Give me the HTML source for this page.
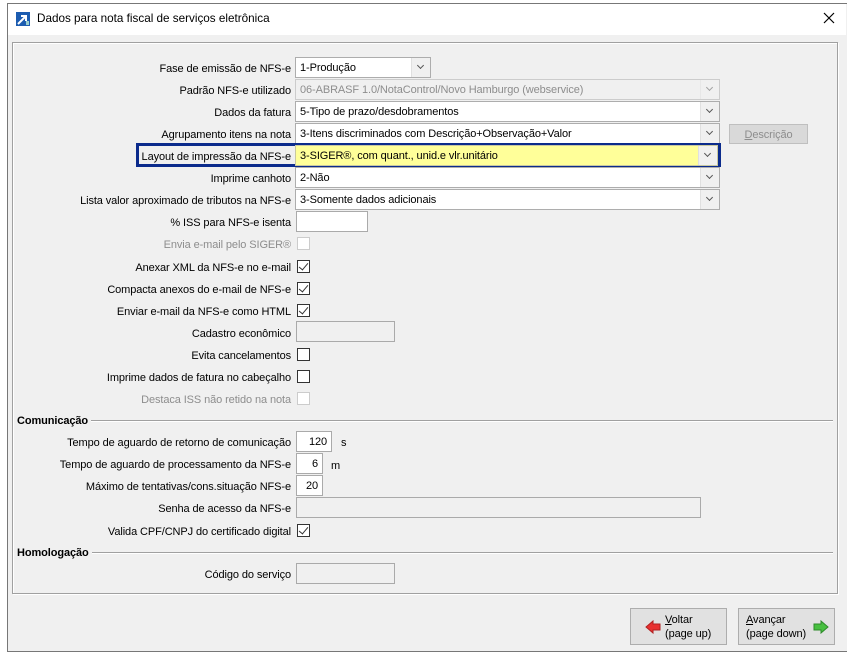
<!DOCTYPE html>
<html><head><meta charset="utf-8"><style>
*{box-sizing:border-box;margin:0;padding:0}
body{width:847px;height:655px;background:#fff;font-family:"Liberation Sans",sans-serif;font-size:11px;letter-spacing:-0.1px;color:#000;position:relative;overflow:hidden}
.win{position:absolute;left:7px;top:3px;width:840px;height:649px;border:1px solid #777;border-right:none;background:#f0f0f0}
.title{position:absolute;left:8px;top:4px;width:838px;height:31px;background:#fff}
.ttext{position:absolute;left:37px;top:12px;font-size:11.7px;letter-spacing:0}
.panel{position:absolute;left:12px;top:42px;width:826px;height:552px;border:1px solid #a0a0a0;box-shadow:inset 1px 1px 0 #fff,1px 1px 0 #fff}
.lbl{position:absolute;right:556px;white-space:nowrap;text-align:right;margin-top:2px}
.dis{color:#8d8d8d}
.cb{position:absolute;height:21px;border:1px solid #adadad;background:#fff;padding:4px 0 0 4px;white-space:nowrap;overflow:hidden}
.cb .ar{position:absolute;right:0;top:0;width:19px;height:19px;background:#f0f0f0;border-left:1px solid #e0e0e0}
.cb .ar:after{content:"";position:absolute;left:6px;top:5px;width:4px;height:4px;border-right:1px solid #555;border-bottom:1px solid #555;transform:rotate(45deg)}
.ed{position:absolute;height:21px;border:1px solid #aaa;background:#fff;text-align:right;padding:4px 4px 0 0}
.ed.g{background:#f0f0f0}
.chk{position:absolute;left:297px;width:13px;height:13px;border:1px solid #333;background:#fff}
.chk.d{border-color:#ccc}
.chk.on:after{content:"";position:absolute;left:3px;top:0px;width:4px;height:8px;border-right:1.3px solid #333;border-bottom:1.3px solid #333;transform:rotate(40deg)}
.hdr{position:absolute;left:17px;font-weight:bold;background:#f0f0f0;padding-right:3px;margin-top:1px}
.line{position:absolute;left:17px;width:816px;height:1px;background:#a0a0a0;box-shadow:0 1px 0 #fff}
.btn{position:absolute;border:1px solid #adadad;background:#e1e1e1;line-height:14px}
u{text-decoration:underline}
</style></head><body>
<div class="win"></div>
<div class="title"></div>
<svg style="position:absolute;left:16px;top:12px" width="14" height="14"><rect width="14" height="14" fill="#1c5cb0"/><path d="M2 12 L9 5 M5 4 H10 V9" stroke="#fff" stroke-width="2" fill="none"/><rect x="10" y="9" width="3" height="4" fill="#9cc"/></svg>
<div class="ttext">Dados para nota fiscal de serviços eletrônica</div>
<svg style="position:absolute;left:823px;top:12px" width="12" height="12"><path d="M1 1L11 11M11 1L1 11" stroke="#000" stroke-width="1.2"/></svg>
<div class="panel"></div>

<div class="lbl" style="top:61px">Fase de emissão de NFS-e</div>
<div class="cb" style="left:295px;top:57px;width:136px">1-Produção<span class="ar"></span></div>
<div class="lbl" style="top:83px">Padrão NFS-e utilizado</div>
<div class="cb" style="left:295px;top:79px;width:425px;background:#f0f0f0;color:#8d8d8d;border-color:#ccc">06-ABRASF 1.0/NotaControl/Novo Hamburgo (webservice)<span class="ar" style="opacity:.5"></span></div>
<div class="lbl" style="top:105px">Dados da fatura</div>
<div class="cb" style="left:295px;top:101px;width:425px">5-Tipo de prazo/desdobramentos<span class="ar"></span></div>
<div class="lbl" style="top:127px">Agrupamento itens na nota</div>
<div class="cb" style="left:295px;top:123px;width:425px">3-Itens discriminados com Descrição+Observação+Valor<span class="ar"></span></div>
<div class="btn" style="left:729px;top:124px;width:79px;height:20px;color:#8d8d8d;text-align:center;padding-top:3px;background:#d9d9d9;border-color:#bfbfbf"><u>D</u>escrição</div>
<div style="position:absolute;left:136px;top:143px;width:585px;height:24px;border:3px solid #0b2b8c"></div>
<div class="lbl" style="top:149px">Layout de impressão da NFS-e</div>
<div class="cb" style="left:295px;top:145px;width:423px;background:#ffff99;border-color:#c8c8a0">3-SIGER®, com quant., unid.e vlr.unitário<span class="ar"></span></div>
<div class="lbl" style="top:171px">Imprime canhoto</div>
<div class="cb" style="left:295px;top:167px;width:425px">2-Não<span class="ar"></span></div>
<div class="lbl" style="top:193px">Lista valor aproximado de tributos na NFS-e</div>
<div class="cb" style="left:295px;top:189px;width:425px">3-Somente dados adicionais<span class="ar"></span></div>
<div class="lbl" style="top:215px">% ISS para NFS-e isenta</div>
<div class="ed" style="left:296px;top:211px;width:72px"></div>
<div class="lbl dis" style="top:237px">Envia e-mail pelo SIGER®</div><div class="chk d" style="top:237px"></div>
<div class="lbl" style="top:260px">Anexar XML da NFS-e no e-mail</div><div class="chk on" style="top:260px"></div>
<div class="lbl" style="top:282px">Compacta anexos do e-mail de NFS-e</div><div class="chk on" style="top:282px"></div>
<div class="lbl" style="top:304px">Enviar e-mail da NFS-e como HTML</div><div class="chk on" style="top:304px"></div>
<div class="lbl" style="top:326px">Cadastro econômico</div>
<div class="ed g" style="left:296px;top:321px;width:99px"></div>
<div class="lbl" style="top:348px">Evita cancelamentos</div><div class="chk" style="top:348px"></div>
<div class="lbl" style="top:370px">Imprime dados de fatura no cabeçalho</div><div class="chk" style="top:370px"></div>
<div class="lbl dis" style="top:392px">Destaca ISS não retido na nota</div><div class="chk d" style="top:392px"></div>

<div class="line" style="top:420px"></div>
<div class="hdr" style="top:414px">Comunicação</div>
<div class="lbl" style="top:435px">Tempo de aguardo de retorno de comunicação</div>
<div class="ed" style="left:296px;top:431px;width:36px">120</div><div style="position:absolute;left:341px;top:437px">s</div>
<div class="lbl" style="top:457px">Tempo de aguardo de processamento da NFS-e</div>
<div class="ed" style="left:296px;top:453px;width:27px">6</div><div style="position:absolute;left:331px;top:460px">m</div>
<div class="lbl" style="top:479px">Máximo de tentativas/cons.situação NFS-e</div>
<div class="ed" style="left:296px;top:475px;width:27px">20</div>
<div class="lbl" style="top:501px">Senha de acesso da NFS-e</div>
<div class="ed g" style="left:296px;top:497px;width:405px"></div>
<div class="lbl" style="top:524px">Valida CPF/CNPJ do certificado digital</div><div class="chk on" style="top:524px"></div>

<div class="line" style="top:552px"></div>
<div class="hdr" style="top:546px">Homologação</div>
<div class="lbl" style="top:567px">Código do serviço</div>
<div class="ed g" style="left:296px;top:563px;width:99px"></div>

<div class="btn" style="left:630px;top:608px;width:97px;height:37px">
<svg style="position:absolute;left:14px;top:11px" width="16" height="14"><path d="M1 7 L8 1 V4 H15 V10 H8 V13 Z" fill="#e83030" stroke="#b02020"/></svg>
<div style="position:absolute;left:34px;top:4px"><u>V</u>oltar<br>(page up)</div></div>
<div class="btn" style="left:738px;top:608px;width:97px;height:37px">
<div style="position:absolute;left:7px;top:4px"><u>A</u>vançar<br>(page down)</div>
<svg style="position:absolute;left:74px;top:11px" width="16" height="14"><path d="M15 7 L8 1 V4 H1 V10 H8 V13 Z" fill="#48c040" stroke="#2e8a2a"/></svg></div>
</body></html>
